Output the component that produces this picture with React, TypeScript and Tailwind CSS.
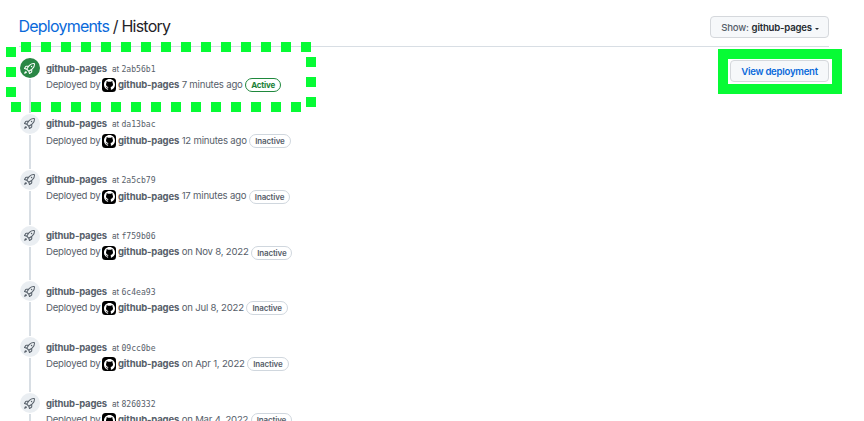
import React from "react";

type Deployment = { sha: string; when: string; active?: boolean };

const deployments: Deployment[] = [
  { sha: "2ab56b1", when: "7 minutes ago", active: true },
  { sha: "da13bac", when: "12 minutes ago" },
  { sha: "2a5cb79", when: "17 minutes ago" },
  { sha: "f759b06", when: "on Nov 8, 2022" },
  { sha: "6c4ea93", when: "on Jul 8, 2022" },
  { sha: "09cc0be", when: "on Apr 1, 2022" },
  { sha: "8260332", when: "on Mar 4, 2022" },
];

function Rocket() {
  return (
    <svg viewBox="0 0 16 16" className="size-[11px] fill-current">
      <path d="M14.064 0h.186C15.216 0 16 .784 16 1.75v.186a8.752 8.752 0 0 1-2.564 6.186l-.458.459c-.314.314-.641.616-.979.904v3.207c0 .608-.315 1.172-.833 1.49l-2.774 1.707a.749.749 0 0 1-1.11-.418l-.954-3.102a1.214 1.214 0 0 1-.145-.125L3.754 9.816a1.218 1.218 0 0 1-.124-.145L.528 8.717a.749.749 0 0 1-.418-1.11l1.71-2.774A1.748 1.748 0 0 1 3.31 4h3.204c.288-.338.59-.665.904-.979l.459-.458A8.749 8.749 0 0 1 14.064 0ZM8.938 3.623h-.002l-.458.458c-.76.76-1.437 1.598-2.02 2.5l-1.5 2.317 2.143 2.143 2.317-1.5c.902-.583 1.74-1.26 2.499-2.02l.459-.458a7.25 7.25 0 0 0 2.123-5.127V1.75a.25.25 0 0 0-.25-.25h-.186a7.249 7.249 0 0 0-5.125 2.123ZM3.56 14.56c-.732.732-2.334 1.045-3.005 1.148a.234.234 0 0 1-.201-.064.234.234 0 0 1-.064-.201c.103-.671.416-2.273 1.15-3.003a1.502 1.502 0 1 1 2.12 2.12Zm6.94-3.935c-.088.06-.177.118-.266.175l-2.35 1.521.548 1.783 1.949-1.2a.25.25 0 0 0 .119-.213ZM3.678 8.116 5.2 5.766c.058-.09.117-.178.176-.266H3.309a.25.25 0 0 0-.213.119l-1.2 1.95ZM12 5a1 1 0 1 1-2 0 1 1 0 0 1 2 0Z" />
    </svg>
  );
}

function Avatar() {
  return (
    <span className="ml-[2px] mr-[2px] flex size-[14px] shrink-0 items-center justify-center rounded-[3.5px] bg-black">
      <svg viewBox="0 0 16 16" className="size-[11px] fill-white">
        <path d="M8 0c4.42 0 8 3.58 8 8a8.013 8.013 0 0 1-5.45 7.59c-.4.08-.55-.17-.55-.38 0-.27.01-1.13.01-2.2 0-.75-.25-1.23-.54-1.48 1.78-.2 3.65-.88 3.65-3.95 0-.88-.31-1.59-.82-2.15.08-.2.36-1.02-.08-2.12 0 0-.67-.22-2.2.82-.64-.18-1.32-.27-2-.27-.68 0-1.36.09-2 .27-1.53-1.03-2.2-.82-2.2-.82-.44 1.1-.16 1.92-.08 2.12-.51.56-.82 1.28-.82 2.15 0 3.06 1.86 3.75 3.64 3.95-.23.2-.44.55-.51 1.07-.46.21-1.61.55-2.33-.66-.15-.24-.6-.83-1.23-.82-.67.01-.27.38.01.53.34.19.73.9.82 1.13.16.45.68 1.31 2.69.94 0 .67.01 1.3.01 1.49 0 .21-.15.45-.55.38A7.995 7.995 0 0 1 0 8c0-4.42 3.58-8 8-8Z" />
      </svg>
    </span>
  );
}

function DeploymentRow({ sha, when, active }: Deployment) {
  return (
    <li className="flex h-[55.85px] shrink-0">
      <div className="flex w-[21px] flex-col items-center">
        <span
          className={
            active
              ? "flex size-5 shrink-0 items-center justify-center rounded-full bg-[#2a8745] text-white"
              : "flex size-5 shrink-0 items-center justify-center rounded-full bg-[#eaeef2] text-[#57606a]"
          }
        >
          <Rocket />
        </span>
        <span className="mt-px mb-px w-[2px] grow bg-[#d8dee4]" />
      </div>
      <div className="ml-[6px] whitespace-nowrap text-[9.6px] text-[#57606a]">
        <div className="mt-[2.7px] flex h-4 items-center">
          <b className="w-[66px] text-[9.5px] font-bold tracking-[-0.17px]">github-pages</b>
          <span className="w-[9.5px] text-[8.2px]">at</span>
          <span className="font-['DejaVu_Sans_Mono',monospace] text-[8.1px]">{sha}</span>
        </div>
        <div className="mt-[0.3px] flex h-4 items-center">
          <span className="w-[54px] tracking-[-0.22px]">Deployed by</span>
          <Avatar />
          <b className="mr-[2.5px] text-[9.5px] font-bold tracking-[-0.15px]">github-pages</b>
          <span className="tracking-[-0.2px]">{when}</span>
          <span
            className={
              active
                ? "ml-[2.5px] flex h-[14px] items-center rounded-full border border-[#1f883d] px-[5px] text-[8px] font-bold tracking-[-0.2px] text-[#1a7f37]"
                : "ml-[2.5px] flex h-[14px] items-center rounded-full border border-[#d0d7de] px-[5px] text-[8px] font-semibold tracking-[-0.15px] text-[#57606a]"
            }
          >
            {active ? "Active" : "Inactive"}
          </span>
        </div>
      </div>
    </li>
  );
}

const horizontal = Array.from({ length: 15 }, (_, i) => i);
const vertical = [0, 1, 2];

function HighlightFrame() {
  return (
    <div className="pointer-events-none absolute left-[6px] top-[42px] h-[70px] w-[310px]">
      <div className="absolute left-[15px] top-0 flex gap-[10px]">
        {horizontal.map((i) => <i key={i} className="size-[10px] bg-[#07fb35]" />)}
      </div>
      <div className="absolute bottom-0 left-[5px] flex gap-[10px]">
        {horizontal.map((i) => <i key={i} className="size-[10px] bg-[#07fb35]" />)}
      </div>
      <div className="absolute left-0 top-[5px] flex flex-col gap-[10px]">
        {vertical.map((i) => <i key={i} className="size-[10px] bg-[#07fb35]" />)}
      </div>
      <div className="absolute right-0 top-[15px] flex flex-col gap-[10px]">
        {vertical.map((i) => <i key={i} className="size-[10px] bg-[#07fb35]" />)}
      </div>
    </div>
  );
}

export default function App() {
  return (
    <div className="relative flex h-[421px] w-[864px] flex-col overflow-hidden bg-white font-['Inter',sans-serif]">
      <header className="ml-[19px] flex h-[47px] w-[810px] shrink-0 justify-between border-b border-[#d8dee4]">
        <h1 className="-ml-[0.5px] mt-[14px] whitespace-nowrap text-[16px] leading-6 tracking-[-0.78px] text-[#1f2328]">
          <a className="text-[#0969da]">Deployments</a> / History
        </h1>
        <button className="mt-4 flex h-[22px] w-[119px] items-center justify-center whitespace-nowrap rounded-[4px] border border-[#d5d8dc] bg-[#f6f8fa] pl-px pt-[2px] text-[9.6px] font-semibold tracking-[-0.2px] text-[#24292f]">
          <span className="mr-[3px] font-medium text-[#57606a]">Show:</span>
          github-pages
          <span className="ml-[3px] mt-px border-x-[2px] border-t-[2px] border-x-transparent border-t-[#24292f]" />
        </button>
      </header>
      <main className="flex justify-between pl-[19px]">
        <ul className="mt-[11px] flex flex-col">
          {deployments.map((d) => <DeploymentRow key={d.sha} {...d} />)}
        </ul>
        <div className="mr-[22px] mt-[2px] flex h-[45px] w-[124px] border-[10px] border-[#07fb35]">
          <button className="ml-[2px] mt-px h-[22px] w-[99px] shrink-0 whitespace-nowrap rounded-[4px] border border-[#d5d8dc] bg-[#f6f8fa] pt-[2px] text-[9.6px] font-semibold tracking-[-0.26px] text-[#0969da]">
            View deployment
          </button>
        </div>
      </main>
      <HighlightFrame />
    </div>
  );
}
